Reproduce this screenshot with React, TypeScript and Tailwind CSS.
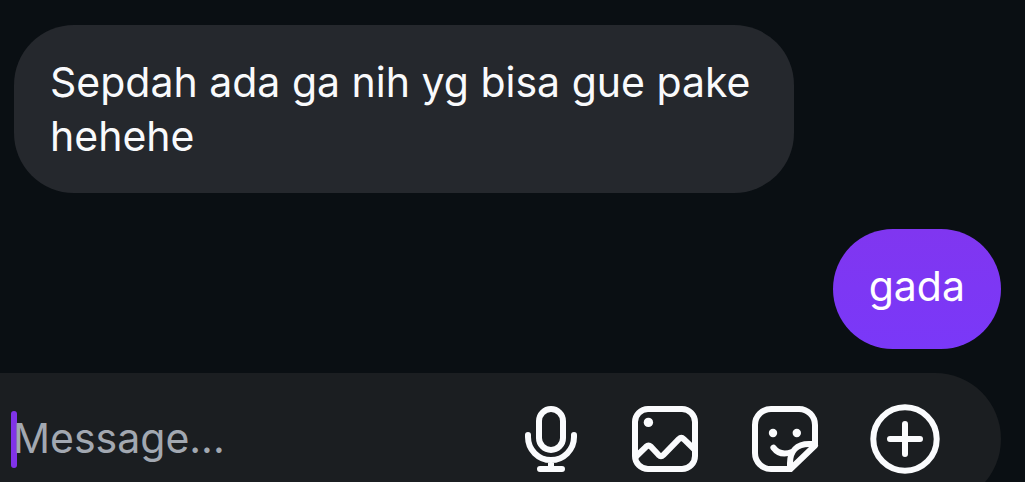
import type { ReactNode } from "react";

type Message = { id: number; text: string; mine: boolean };

const messages: Message[] = [
  { id: 1, text: "Sepdah ada ga nih yg bisa gue pake hehehe", mine: false },
  { id: 2, text: "gada", mine: true },
];

function Bubble({ text, mine }: Message) {
  return (
    <li
      className={
        mine
          ? "min-h-[120px] max-w-[780px] self-end rounded-[60px] bg-linear-to-b from-[#8036f0] to-[#7a38f8] px-9 py-[30px] text-white"
          : "min-h-[120px] max-w-[780px] self-start rounded-[60px] bg-[#25282d] px-9 py-[30px] text-[#f9fafc]"
      }
    >
      <p className="text-[41px] leading-[54px]">{text}</p>
    </li>
  );
}

function IconButton({ label, width = 72, children }: { label: string; width?: number; children: ReactNode }) {
  return (
    <button type="button" aria-label={label} className="shrink-0 text-[#fafbfd]">
      <svg
        width={width}
        height={72}
        viewBox={`0 0 ${width} 72`}
        fill="none"
        stroke="currentColor"
        strokeWidth={6}
        strokeLinecap="round"
        strokeLinejoin="round"
        className="block"
      >
        {children}
      </svg>
    </button>
  );
}

function Composer() {
  return (
    <form
      className="mr-6 flex h-[132px] shrink-0 items-center rounded-r-[66px] bg-[#1b1e21] pr-[60px] pl-[11px]"
      onSubmit={(e) => e.preventDefault()}
    >
      <span aria-hidden="true" className="h-[57px] w-[6px] shrink-0 rounded-full bg-[#8033e8]" />
      <input
        type="text"
        aria-label="Message"
        placeholder="Message..."
        className="-ml-1 h-[60px] min-w-0 flex-1 bg-transparent text-[41px] text-[#f9fafc] caret-[#8033e8] outline-none placeholder:text-[#a2a8b1]"
      />
      <div className="flex items-center gap-12">
        <IconButton label="Record voice message" width={60}>
          <rect x="18" y="6" width="24" height="41" rx="12" />
          <path d="M7 32v2a23 23 0 0 0 46 0v-2M30 57v9M19 66h22" />
        </IconButton>
        <IconButton label="Send photo">
          <rect x="6" y="6" width="60" height="60" rx="13" />
          <circle cx="19.4" cy="19.4" r="4.7" fill="currentColor" stroke="none" />
          <path d="M7 53.5 17 43.8Q19.5 41.5 22 43.8L29.5 51.8Q32 54.3 34.5 51.8L49.8 36.2Q52.3 33.8 54.8 36.2L65 46" />
        </IconButton>
        <IconButton label="Send sticker">
          <path d="M66 42V22A16 16 0 0 0 50 6H22A16 16 0 0 0 6 22V50A16 16 0 0 0 22 66H41.5L66 42.5" />
          <path d="M41 66V60C41 48 48 41 60 41H66" />
          <path d="M24.4 44.6Q31 53.5 43 49" />
          <circle cx="24" cy="30" r="4.2" fill="currentColor" stroke="none" />
          <circle cx="47.8" cy="30" r="4.2" fill="currentColor" stroke="none" />
        </IconButton>
        <IconButton label="More options">
          <circle cx="36" cy="36" r="31.7" />
          <path d="M36 21v30M21 36h30" />
        </IconButton>
      </div>
    </form>
  );
}

export default function App() {
  return (
    <main className="flex h-screen flex-col gap-6 overflow-hidden bg-[#0a0f13] pt-[25px] font-['Inter','Liberation_Sans',sans-serif]">
      <ul className="flex shrink-0 flex-col gap-9 pr-6 pl-[14px]">
        {messages.map((message) => (
          <Bubble key={message.id} {...message} />
        ))}
      </ul>
      <Composer />
    </main>
  );
}
